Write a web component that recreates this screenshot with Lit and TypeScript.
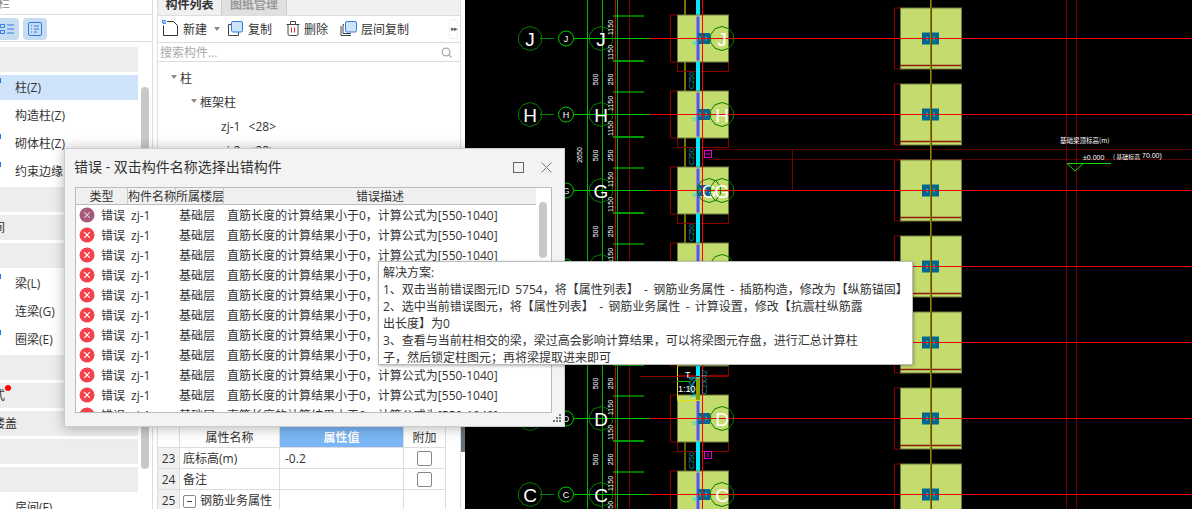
import { LitElement, html, svg, css } from 'lit';
import { customElement } from 'lit/decorators.js';

const rowsY = [38.5, 114.5, 190.5, 266.5, 342.5, 418.5, 494.5];
const letters = ['J', 'H', 'G', 'F', 'E', 'D', 'C'];

// ten sided outline used for the axis bubbles, point at the top
const bubblePoints = (cx: number, cy: number, r: number) => {
  const pts: string[] = [];
  for (let i = 0; i < 10; i++) {
    const a = (Math.PI / 5) * i - Math.PI / 2;
    pts.push(`${(cx + r * Math.cos(a)).toFixed(1)},${(cy + r * Math.sin(a)).toFixed(1)}`);
  }
  return pts.join(' ');
};

const vtext = (x: number, y: number, t: string, fill = '#fff', size = 7) => svg`
  <text x=${x} y=${y} fill=${fill} font-size=${size} text-anchor="middle"
    transform="rotate(-90 ${x} ${y})" font-family="Liberation Sans, sans-serif">${t}</text>`;

const bubble = (x: number, y: number, letter: string) => svg`
  <polygon points=${bubblePoints(x, y, 12)} fill="none" stroke="#0a7a00" stroke-width="1" />
  <text x=${x} y=${y + 7} fill="#fff" font-size="19" text-anchor="middle"
    font-family="Liberation Sans, sans-serif">${letter}</text>`;

@customElement('cad-view')
class CadView extends LitElement {
  static styles = css`
    :host {
      display: block;
      flex: 1;
      background: #000;
      overflow: hidden;
    }
    svg {
      display: block;
    }
  `;

  private row(y: number, letter: string, i: number) {
    return svg`
      <rect x="677.5" y=${y - 23.5} width="51" height="47" fill="#c4dc6e" stroke="#6f7a40" stroke-width="1" />
      <rect x="900.5" y=${y - 30.5} width="61" height="61" fill="#c4dc6e" stroke="#6f7a40" stroke-width="1" />

      <path d="M677 ${y - 23.5} H670.5 V${y + 23.5} H677 M677.5 ${y + 23.5} V${y + 33} H728.5 V${y + 23.5}" fill="none" stroke="#8a0000" />
      <path d="M900 ${y - 30.5} H894.5 V${y + 30.5} H900" fill="none" stroke="#8a0000" />
      <path d="M900 ${y + 27} H961" stroke="#8a1a00" stroke-width="1.5" />

      <path d="M613 ${y - 22.5} H644" stroke="#00e000" />
      <path d="M613 ${y + 22.5} H644" stroke="#009a00" stroke-width="2" />

      <path d="M698 ${y - 22} V${y + 22}" stroke="#5a50ff" stroke-width="3" />
      <path d="M698 ${y + 23} V${y + 54}" stroke="#00eaff" stroke-width="4" />

      <rect x="698" y=${y - 5.5} width="12" height="11" fill="#00688c" />
      <rect x="922" y=${y - 6} width="17" height="12" fill="#00688c" />
      <path d="M700 ${y - 2} V${y + 2} M700 ${y} H706 M706 ${y - 2} V${y + 2}" stroke="#aab" />
      <path d="M927 ${y - 2} V${y + 2} M927 ${y} H934 M934 ${y - 2} V${y + 2}" stroke="#aab" />
      <circle cx="694.5" cy=${y + 4.5} r="1.5" fill="none" stroke="#20e0e0" />

      <path d="M540 ${y} H554" stroke="#008a00" />
      <path d="M574 ${y} H650" stroke="#00c800" stroke-width="1" />
      <path d="M650 ${y} H1192" stroke="#f00000" stroke-width="1" />

      ${bubble(530, y, letter)}
      <circle cx="566" cy=${y} r="7.5" fill="#000" stroke="#00d000" />
      <text x="566" y=${y + 3.5} fill="#fff" font-size="9" text-anchor="middle" font-family="Liberation Sans, sans-serif">${letter}</text>
      ${bubble(601, y, letter)}
      ${i === 2 ? bubble(709, y, letter) : ''}
      ${bubble(722, y, letter)}

      ${vtext(597.5, y + 41, '500')}
      ${vtext(612.5, y + 41, '250')}
      ${vtext(612.5, y - 11, '1150')}
      ${vtext(612.5, y + 14, '1150')}
      ${vtext(694, y + 42, 'C250', '#109aa0')}
    `;
  }

  render() {
    return html`<svg width="727" height="509" viewBox="465 0 727 509">
      <path d="M707 149.5 H1192 M707 159.5 H1192" stroke="#5a0000" />
      <path d="M792.5 149 V190" stroke="#7a0000" />
      <path d="M1066.5 0 V509 M1076.5 0 V509" stroke="#6a0000" />
      <path d="M629.5 0 V509" stroke="#7a0000" />
      <path d="M587.5 0 V509 M602.5 0 V509 M617.5 0 V509" stroke="#00b400" />
      <path d="M615.5 0 V509" stroke="#d00000" />
      <path d="M685 0 V262" stroke="#eaea00" stroke-width="1" />
      <path d="M685 400 V509" stroke="#c8c000" stroke-width="1" />
      <path d="M698 0 V16" stroke="#00eaff" stroke-width="4" />
      ${rowsY.map((y, i) => this.row(y, letters[i], i))}
      <path d="M702.5 0 V509" stroke="#f00000" />
      <path d="M930.5 0 V509" stroke="#00d000" />
      <path d="M931.5 0 V509" stroke="#f00000" />

      <rect x="704.5" y="150.5" width="7" height="7" fill="none" stroke="#e000e0" />
      <path d="M706 154 H710" stroke="#e000e0" />
      <rect x="704.5" y="451.5" width="7" height="7" fill="none" stroke="#e000e0" />
      <path d="M708 453 V457" stroke="#e000e0" />
      ${vtext(582, 155, '2650')}

      <path d="M677.5 360 V400.5 H700" fill="none" stroke="#e8e000" />
      <path d="M640 376.5 H728.5 V366" fill="none" stroke="#8a0000" />
      <path d="M677 381.5 H690" stroke="#00c000" />
      <path d="M689 378 H697 L690 388 L696 396 H690" fill="none" stroke="#10d0e0" />
      <path d="M698 378 V400" stroke="#8aa000" stroke-width="4" />
      <text x="685" y="378" fill="#fff" font-size="9" font-family="Liberation Sans, sans-serif">T</text>
      <text x="678" y="392" fill="#fff" font-size="9" font-family="Liberation Sans, sans-serif">1:10</text>
      ${vtext(707, 382, 'C2X42', '#109aa0', 8)}

      <text x="1060" y="143" fill="#fff" font-size="6.5" font-family="Noto Sans CJK SC, sans-serif">基础梁顶标高(m)</text>
      <text x="1083" y="160" fill="#fff" font-size="7" font-family="Liberation Sans, sans-serif">±0.000</text>
      <text x="1113" y="159" fill="#fff" font-size="6" font-family="Noto Sans CJK SC, sans-serif">( 基础标高</text>
      <text x="1142" y="158" fill="#fff" font-size="7" font-family="Liberation Sans, sans-serif">70.00)</text>
      <path d="M1067 163.5 H1111 M1067 163.5 L1075 171 L1083 163.5" fill="none" stroke="#10e010" />
    </svg>`;
  }
}

const caret = html`<svg class="caret" width="6" height="4" viewBox="0 0 6 4"><path d="M0 0H6L3 4Z" fill="#888" /></svg>`;

const icons = {
  create: html`<svg width="17" height="17" viewBox="0 0 17 17">
    <path d="M1.5 5.500V15.500H15.500V5.500L11.500 1.500H5" fill="none" stroke="#333" />
    <path d="M0 0h4v4H0z" fill="#4a94ee" />
    <path d="M1 1h1v1H1zM3 1h1v1H3zM0 3h1v1H0zM2 2h1v1H2z" fill="#cfe2fb" />
  </svg>`,
  copy: html`<svg width="17" height="17" viewBox="0 0 17 17">
    <path d="M4 4.500H1.500V15.500H11.500V12" fill="none" stroke="#444" />
    <rect x="4.500" y="1.500" width="11" height="10.500" rx="1.500" fill="#cfe2fb" stroke="#2f7de1" />
  </svg>`,
  trash: html`<svg width="14" height="17" viewBox="0 0 14 17">
    <path d="M0.500 4.500H13.500M4.500 4V1.500H9.500V4M2 4.500V14A1.500 1.500 0 0 0 3.500 15.500H10.500A1.500 1.500 0 0 0 12 14V4.500" fill="none" stroke="#444" />
    <path d="M5.500 7.500V12.500M8.500 7.500V12.500" stroke="#e02020" />
  </svg>`,
  layer: html`<svg width="17" height="17" viewBox="0 0 17 17">
    <path d="M4 4.500H3V13.500H11M1 6V15.500H11" fill="none" stroke="#444" />
    <rect x="5.500" y="1.500" width="11" height="10.500" rx="1.500" fill="#cfe2fb" stroke="#2f7de1" />
  </svg>`,
  search: html`<svg width="11" height="11" viewBox="0 0 11 11">
    <circle cx="5" cy="5" r="3.800" fill="none" stroke="#aaa" stroke-width="1.300" />
    <path d="M8 8L10.500 10.500" stroke="#aaa" stroke-width="1.300" />
  </svg>`,
};

type Band = { label?: string; item?: boolean; on?: boolean; tick?: boolean; dot?: boolean; cut?: boolean };

const bands: Band[] = [
  {},
  { label: '柱(Z)', item: true, on: true, tick: true },
  { label: '构造柱(Z)', item: true },
  { label: '砌体柱(Z)', item: true, tick: true },
  { label: '约束边缘', item: true, tick: true },
  {},
  { label: '间', cut: true },
  {},
  { label: '梁(L)', item: true, tick: true },
  { label: '连梁(G)', item: true },
  { label: '圈梁(E)', item: true, tick: true },
  {},
  { label: '式', cut: true, dot: true },
  { label: '楼盖', cut: true },
  {},
  {},
  { label: '房间(F)', item: true },
];

const errorRows = Array.from({ length: 11 }, (_, i) => i);

const tipLines = [
  '解决方案:',
  '1、双击当前错误图元ID 5754，将【属性列表】 - 钢筋业务属性 - 插筋构造，修改为【纵筋锚固】',
  '2、选中当前错误图元，将【属性列表】 - 钢筋业务属性 - 计算设置，修改【抗震柱纵筋露',
  '出长度】为0',
  '3、查看与当前柱相交的梁，梁过高会影响计算结果，可以将梁图元存盘，进行汇总计算柱',
  '子，然后锁定柱图元；再将梁提取进来即可',
];

@customElement('app-root')
export class AppRoot extends LitElement {
  static styles = css`
    :host {
      display: flex;
      position: relative;
      width: 1192px;
      height: 509px;
      overflow: hidden;
      background: #fff;
      color: #333;
      font: 12px / 1.2 'Open Sans', 'Noto Sans CJK SC', sans-serif;
    }

    /* left type list */
    .side {
      width: 152px;
      flex: none;
      border-right: 1px solid #ddd;
      display: flex;
      flex-direction: column;
      overflow: hidden;
    }
    .side-head {
      height: 14px;
      flex: none;
      border-bottom: 1px solid #ddd;
      color: #888;
      line-height: 8px;
      overflow: hidden;
      margin-left: -2px;
    }
    .side-tools {
      height: 27px;
      flex: none;
      box-sizing: border-box;
      border-bottom: 1px solid #ddd;
      display: flex;
      gap: 4px;
      padding-top: 3px;
      margin-left: -5px;
    }
    .side-btn {
      width: 24px;
      height: 22px;
      border-radius: 4px;
      background: #c5dcf3;
      display: flex;
      align-items: center;
      justify-content: center;
    }
    .side-body {
      flex: 1;
      display: flex;
      padding-top: 5px;
      min-height: 0;
    }
    .bands {
      width: 138px;
      flex: none;
      display: flex;
      flex-direction: column;
      gap: 3px;
    }
    .band {
      height: 25px;
      flex: none;
      box-sizing: border-box;
      background: #ededed;
      display: flex;
      align-items: center;
      position: relative;
      color: #333;
      padding-top: 2px;
    }
    .band.item {
      background: transparent;
      padding-left: 15px;
    }
    .band.on {
      background: #cfe4fb;
    }
    .label-cut {
      margin-left: -7px;
    }
    .tick {
      position: absolute;
      left: 0;
      top: 3px;
      width: 1px;
      height: 5px;
      background: #1e7be0;
    }
    .dot {
      position: absolute;
      left: 5px;
      top: 2px;
      width: 6px;
      height: 6px;
      border-radius: 50%;
      background: #f00;
    }
    .side-scroll {
      width: 8px;
      margin: 40px 0 0 3px;
      height: 382px;
      border-radius: 4px;
      background: #c8c8c8;
    }

    /* component list panel */
    .panel {
      width: 304px;
      margin-left: 4px;
      flex: none;
      box-sizing: border-box;
      border-left: 1px solid #ddd;
      border-right: 1px solid #ddd;
      display: flex;
      flex-direction: column;
    }
    .tabs {
      height: 15px;
      flex: none;
      display: flex;
      background: #f0f0f0;
      line-height: 9px;
      overflow: hidden;
    }
    .tab {
      width: 64px;
      box-sizing: border-box;
      text-align: center;
      font-weight: 700;
      border-right: 1px solid #ccc;
      color: #333;
    }
    .tab.off {
      width: 65px;
      background: #e0e0e0;
      color: #999;
    }
    .tools {
      height: 28px;
      flex: none;
      box-sizing: border-box;
      border-top: 1px solid #ddd;
      border-bottom: 1px solid #ddd;
      display: flex;
      align-items: center;
      padding-left: 4px;
    }
    .tool {
      display: flex;
      align-items: center;
      gap: 4px;
    }
    .tool span {
      padding-top: 3px;
    }
    .tool .caret {
      margin-left: 3px;
    }
    .tool-copy {
      margin-left: 7px;
    }
    .tool-trash {
      margin-left: 14px;
    }
    .tool-layer {
      margin-left: 12px;
    }
    .more {
      width: 9px;
      height: 20px;
      box-sizing: border-box;
      border: 1px solid #eee;
      border-radius: 3px;
      margin-left: auto;
      margin-right: 2px;
      color: #555;
      font-size: 7px;
      line-height: 18px;
      text-align: center;
      letter-spacing: -1px;
    }
    .search {
      height: 19px;
      flex: none;
      box-sizing: border-box;
      border-bottom: 1px solid #ddd;
      display: flex;
      align-items: center;
      justify-content: space-between;
      padding: 0 8px 0 2px;
      color: #aaa;
    }
    .search span {
      padding-top: 3px;
    }
    .tree {
      flex: 1;
      min-height: 0;
      overflow: hidden;
      padding-top: 3px;
    }
    .node {
      height: 24px;
      display: flex;
      align-items: center;
      gap: 3px;
      white-space: pre;
      word-spacing: 1px;
    }
    .node span {
      padding-top: 4px;
    }
    .lv0 {
      padding-left: 13px;
    }
    .lv1 {
      padding-left: 33px;
    }
    .lv2 {
      padding-left: 63px;
    }
    .props {
      height: 82px;
      flex: none;
      width: 287px;
      display: grid;
      grid-template-columns: 22px 100px 124px 41px;
      grid-auto-rows: 21px;
      border-right: 1px solid #ddd;
      overflow: hidden;
    }
    .cell {
      box-sizing: border-box;
      border-right: 1px solid #ddd;
      border-bottom: 1px solid #ddd;
      display: flex;
      align-items: center;
      padding: 2px 0 0 3px;
    }
    .cell.head {
      justify-content: center;
      padding-left: 0;
    }
    .cell.idx {
      background: #f0f0f0;
      justify-content: center;
      padding-left: 0;
    }
    .cell.value {
      padding-left: 5px;
    }
    .cell.sel {
      background: #7ab6f5;
      color: #fff;
      font-weight: 700;
      justify-content: center;
      padding-left: 0;
    }
    .cell.check {
      justify-content: center;
      padding: 0;
      border-right: 0;
    }
    .cell.head.check {
      padding-top: 2px;
    }
    .box {
      width: 13px;
      height: 13px;
      border: 1px solid #888;
      border-radius: 2px;
    }
    .minus {
      width: 11px;
      height: 11px;
      border: 1px solid #888;
      border-radius: 2px;
      margin-right: 4px;
      display: flex;
      align-items: center;
      justify-content: center;
    }
    .minus::after {
      content: '';
      width: 5px;
      height: 1px;
      background: #444;
    }
    .rail {
      width: 4px;
      flex: none;
      padding-top: 427px;
    }
    .rail div {
      height: 25px;
      background: #667079;
    }

    /* error dialog */
    .dialog {
      position: absolute;
      left: 64px;
      top: 148px;
      width: 501px;
      height: 279px;
      box-sizing: border-box;
      background: #f3f3f3;
      border: 1px solid #ccc;
      box-shadow: 0 1px 12px rgba(0, 0, 0, 0.3);
      display: flex;
      flex-direction: column;
      padding: 0 12px 0 10px;
    }
    .title {
      height: 38px;
      flex: none;
      box-sizing: border-box;
      display: flex;
      align-items: center;
      font-size: 14px;
      color: #333;
      padding-bottom: 2px;
    }
    .title span {
      margin-left: -1px;
    }
    .win {
      margin-left: auto;
      display: flex;
      gap: 17px;
    }
    .grid {
      height: 226px;
      flex: none;
      box-sizing: border-box;
      border: 1px solid #bbb;
      background: #fff;
      display: flex;
    }
    .grid-main {
      flex: 1;
      min-width: 0;
      display: flex;
      flex-direction: column;
      overflow: hidden;
    }
    .cols {
      display: grid;
      grid-template-columns: 52px 48px 48px 313px;
    }
    .cols.top {
      height: 17px;
      flex: none;
      box-sizing: border-box;
      background: #f0f0f0;
      border-bottom: 1px solid #bbb;
      line-height: 17px;
      text-align: center;
      white-space: nowrap;
      width: 461px;
    }
    .cols.top span {
      box-sizing: border-box;
      border-right: 1px solid #c8c8c8;
    }
    .cols.err {
      height: 20px;
      flex: none;
      align-items: center;
      white-space: nowrap;
    }
    .cols.err span {
      padding-top: 2px;
    }
    .err-type {
      display: flex;
      align-items: center;
      gap: 6px;
      padding-left: 3px;
    }
    .err-cell {
      padding-left: 3px;
    }
    .mark {
      display: block;
      flex: none;
    }
    .grid-scroll {
      width: 15px;
      flex: none;
    }
    .grid-scroll div {
      width: 8px;
      height: 56px;
      margin: 14px 0 0 3px;
      border-radius: 4px;
      background: #c8c8c8;
    }
    .grip {
      align-self: flex-end;
      margin: 1px -10px 0 0;
      display: block;
    }

    /* hint tooltip */
    .tip {
      position: absolute;
      left: 378px;
      top: 261px;
      width: 535px;
      height: 104px;
      box-sizing: border-box;
      background: #fff;
      border: 1px solid #bbb;
      box-shadow: 1px 1px 3px rgba(0, 0, 0, 0.3);
      padding: 2px 0 0 4px;
      line-height: 17px;
      white-space: nowrap;
      word-spacing: 2.2px;
      color: #333;
    }
  `;

  private bandRow(b: Band) {
    const cls = `band${b.item ? ' item' : ''}${b.on ? ' on' : ''}`;
    return html`<div class=${cls}>
      ${b.tick ? html`<i class="tick"></i>` : ''}
      ${b.label ? html`<span class=${b.cut ? 'label-cut' : ''}>${b.label}</span>` : ''}
      ${b.dot ? html`<i class="dot"></i>` : ''}
    </div>`;
  }

  private errorRow(i: number) {
    const fill = i === 0 ? '#a8587a' : '#f5424a';
    return html`<div class="cols err">
      <div class="err-type">
        <svg class="mark" width="16" height="16" viewBox="0 0 16 16">
          <circle cx="8" cy="8" r="7.500" fill=${fill} />
          <path d="M5.200 5.200L10.800 10.800M10.800 5.200L5.200 10.800" stroke=${i === 0 ? '#d8c8d4' : '#fff'} stroke-width="1.200" />
        </svg>
        <span>错误</span>
      </div>
      <span class="err-cell">zj-1</span>
      <span class="err-cell">基础层</span>
      <span class="err-cell">直筋长度的计算结果小于0，计算公式为[550-1040]</span>
    </div>`;
  }

  render() {
    return html`
      <aside class="side">
        <div class="side-head">栏</div>
        <div class="side-tools">
          <div class="side-btn">
            <svg width="16" height="14" viewBox="0 0 16 14">
              <path d="M1.500 2.500h4v3h-4zM1.500 8.500h4v3h-4z" fill="none" stroke="#2f7de1" />
              <path d="M8 3H15M8 7H15M8 11H15" stroke="#2f7de1" />
            </svg>
          </div>
          <div class="side-btn">
            <svg width="16" height="16" viewBox="0 0 16 16">
              <rect x="1.500" y="1.500" width="13" height="13" rx="1.500" fill="none" stroke="#2f7de1" />
              <path d="M4 5H5M7 5H12M4 8H5M7 8H12M4 11H5M7 11H10" stroke="#2f7de1" />
            </svg>
          </div>
        </div>
        <div class="side-body">
          <div class="bands">${bands.map((b) => this.bandRow(b))}</div>
          <div class="side-scroll"></div>
        </div>
      </aside>

      <section class="panel">
        <div class="tabs">
          <div class="tab">构件列表</div>
          <div class="tab off">图纸管理</div>
        </div>
        <div class="tools">
          <div class="tool">${icons.create}<span>新建</span>${caret}</div>
          <div class="tool tool-copy">${icons.copy}<span>复制</span></div>
          <div class="tool tool-trash">${icons.trash}<span>删除</span></div>
          <div class="tool tool-layer">${icons.layer}<span>层间复制</span></div>
          <div class="more">▸▸</div>
        </div>
        <div class="search"><span>搜索构件...</span>${icons.search}</div>
        <div class="tree">
          <div class="node lv0">${caret}<span>柱</span></div>
          <div class="node lv1">${caret}<span>框架柱</span></div>
          <div class="node lv2"><span>zj-1  &lt;28&gt;</span></div>
          <div class="node lv2"><span>zj-2  &lt;28&gt;</span></div>
        </div>
        <div class="props">
          <div class="cell head"></div>
          <div class="cell head">属性名称</div>
          <div class="cell sel">属性值</div>
          <div class="cell head check">附加</div>

          <div class="cell idx">23</div>
          <div class="cell">底标高(m)</div>
          <div class="cell value">-0.2</div>
          <div class="cell check"><div class="box"></div></div>

          <div class="cell idx">24</div>
          <div class="cell">备注</div>
          <div class="cell value"></div>
          <div class="cell check"><div class="box"></div></div>

          <div class="cell idx">25</div>
          <div class="cell"><span class="minus"></span>钢筋业务属性</div>
          <div class="cell value"></div>
          <div class="cell check"></div>
        </div>
      </section>
      <div class="rail"><div></div></div>

      <cad-view></cad-view>

      <div class="dialog">
        <div class="title">
          <span>错误 - 双击构件名称选择出错构件</span>
          <div class="win">
            <svg width="11" height="11" viewBox="0 0 11 11"><rect x="0.500" y="0.500" width="10" height="10" fill="none" stroke="#666" /></svg>
            <svg width="11" height="11" viewBox="0 0 11 11"><path d="M0.500 0.500L10.500 10.500M10.500 0.500L0.500 10.500" stroke="#777" /></svg>
          </div>
        </div>
        <div class="grid">
          <div class="grid-main">
            <div class="cols top">
              <span>类型</span><span>构件名称</span><span>所属楼层</span><span>错误描述</span>
            </div>
            ${errorRows.map((i) => this.errorRow(i))}
          </div>
          <div class="grid-scroll"><div></div></div>
        </div>
        <svg class="grip" width="10" height="10" viewBox="0 0 10 10">
          <path d="M7 0h2v2H7zM4 3h2v2H4zM7 3h2v2H7zM1 6h2v2H1zM4 6h2v2H4zM7 6h2v2H7z" fill="#777" />
        </svg>
      </div>

      <div class="tip">${tipLines.map((l) => html`<div>${l}</div>`)}</div>
    `;
  }
}
